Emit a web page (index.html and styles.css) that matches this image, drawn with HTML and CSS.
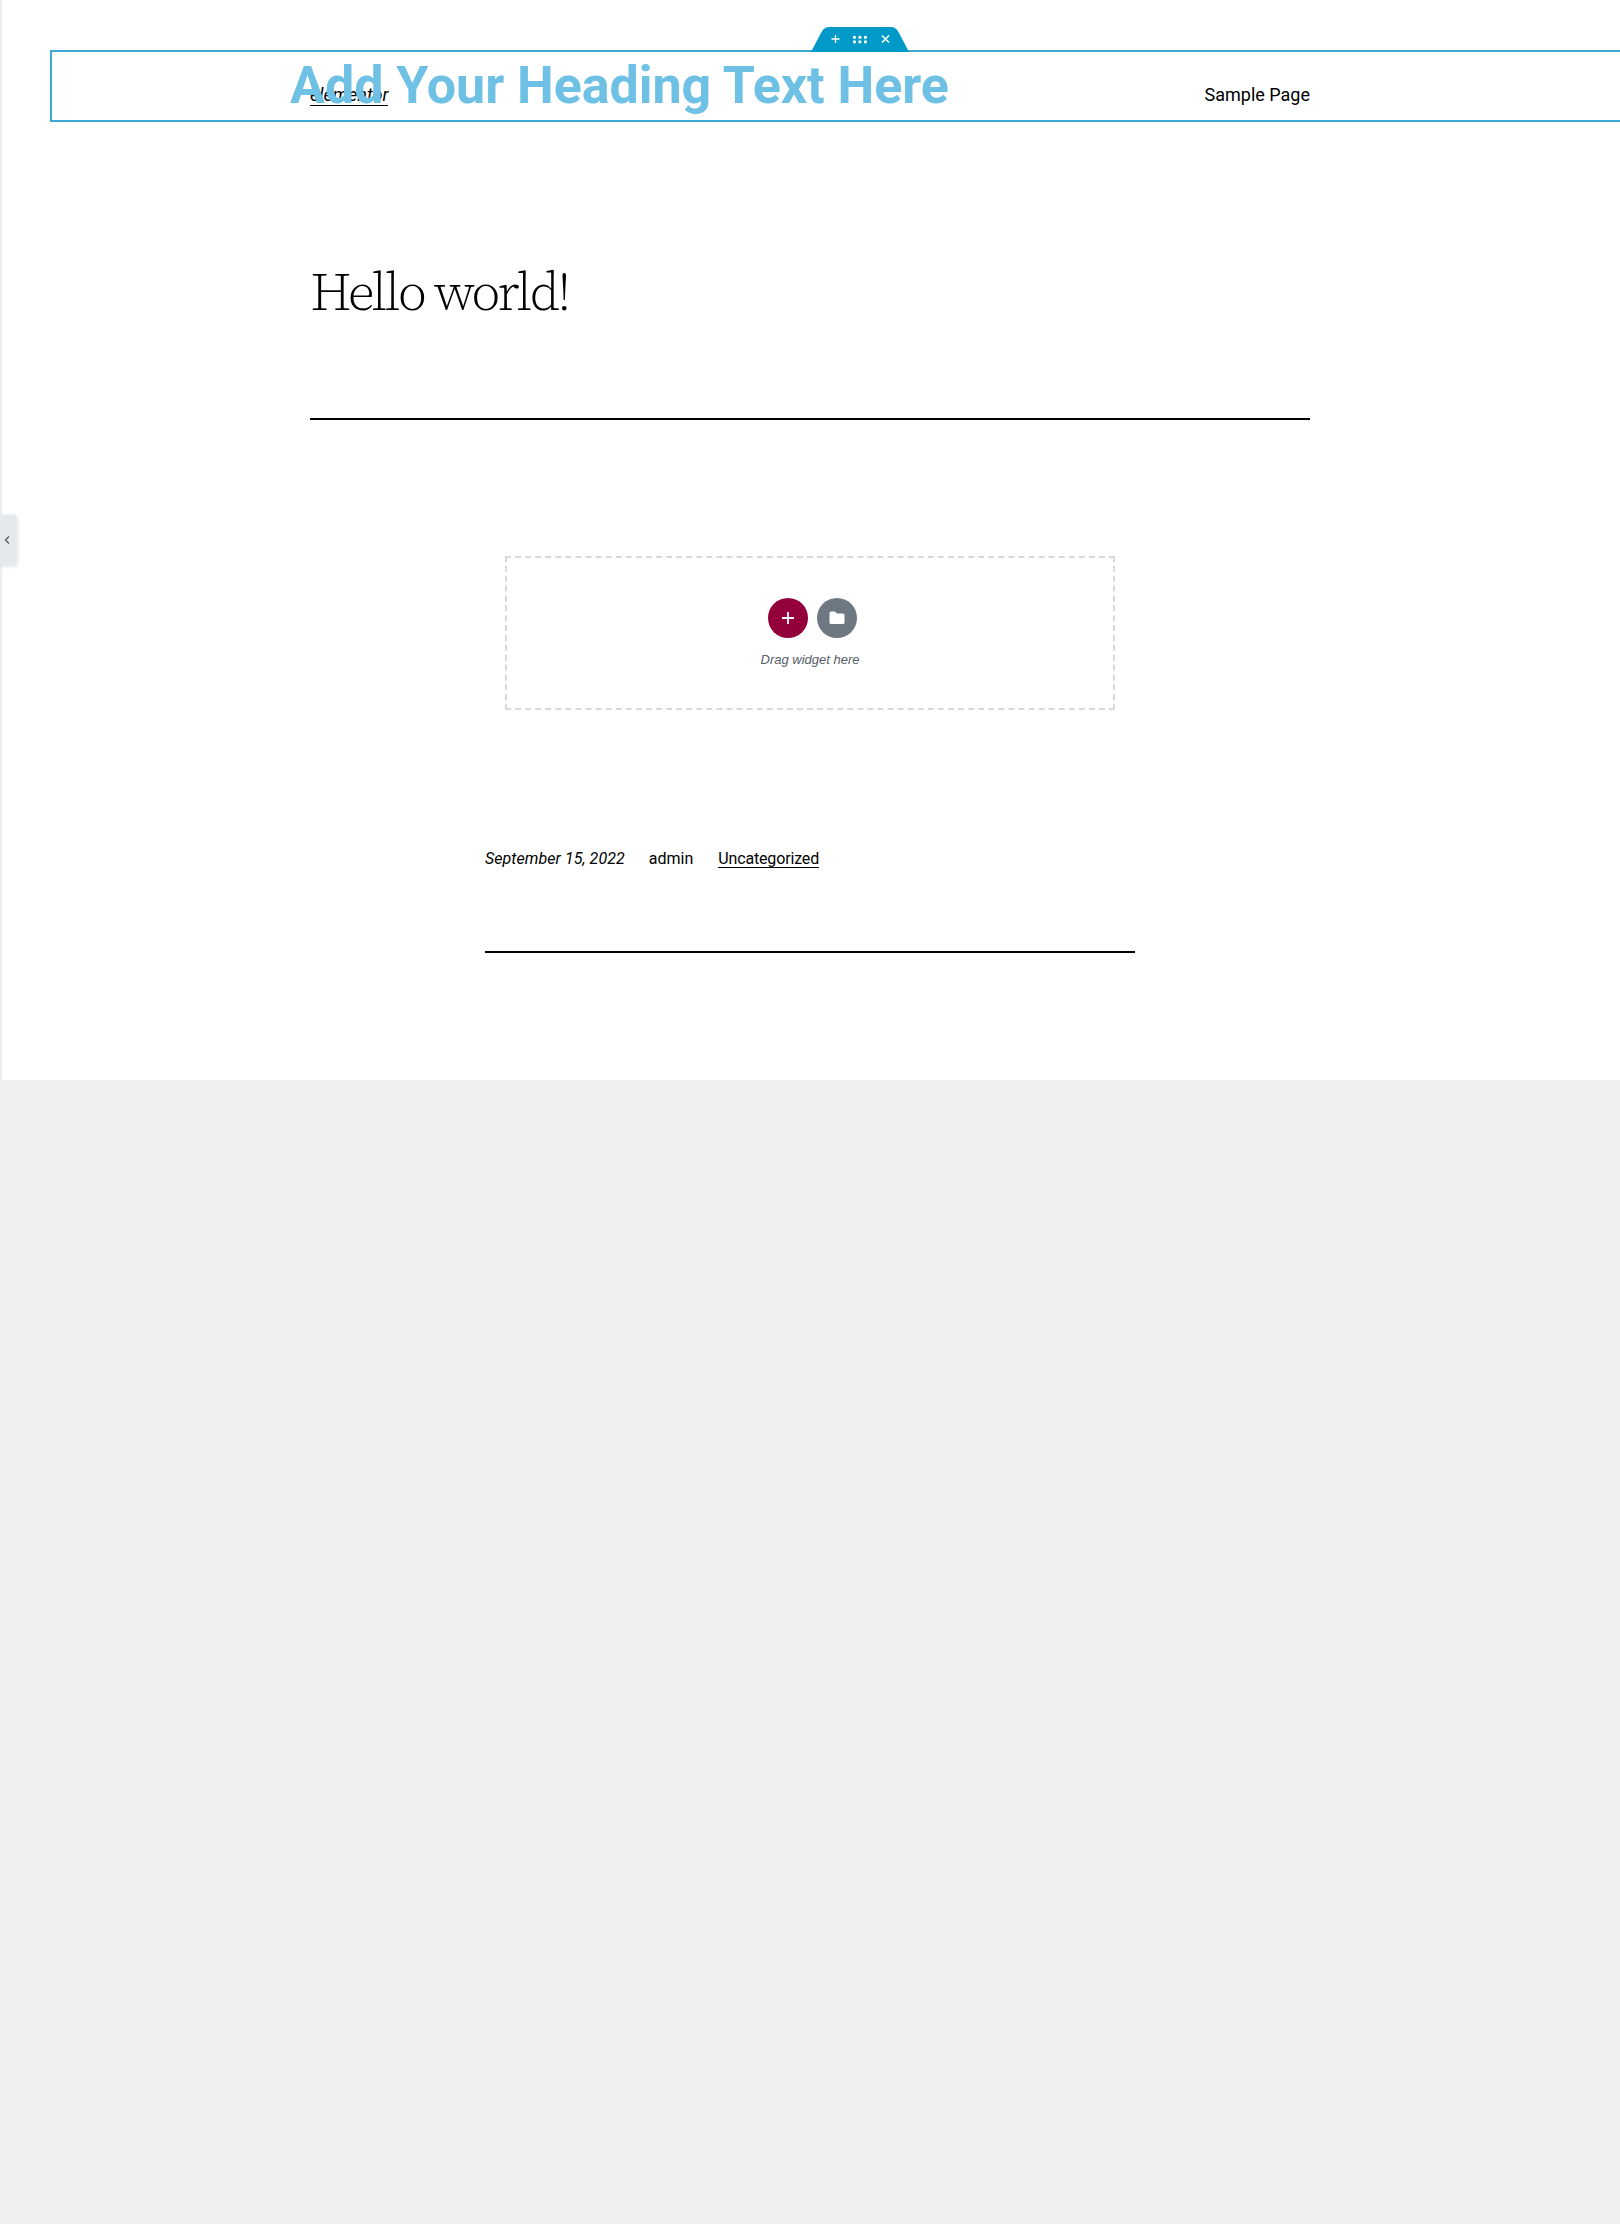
FILE: index.html
```html
<!DOCTYPE html>
<html lang="en">
<head>
<meta charset="utf-8">
<title>Hello world!</title>
<link rel="stylesheet" href="styles.css">
</head>
<body>
<main class="page">
  <header class="site-header">
    <a class="site-title">elementor</a>
    <nav>Sample Page</nav>
  </header>
  <section class="post-head">
    <h1 class="post-title"><span>Hello world!</span></h1>
  </section>
  <section class="drop-area">
    <div class="buttons">
      <span class="round add"><svg width="12" height="12" viewBox="0 0 12 12"><path d="M6 0v12M0 6h12" stroke="#fff" stroke-width="1.8"/></svg></span>
      <span class="round folder"><svg width="16" height="14" viewBox="0 0 16 14"><path d="M2 .5h4l2 2h6a1.500 1.500 0 0 1 1.500 1.500v7.500a1.500 1.500 0 0 1-1.500 1.500H2A1.500 1.500 0 0 1 .5 11.500V2A1.500 1.500 0 0 1 2 .5z" fill="#fff"/></svg></span>
    </div>
    <p class="hint">Drag widget here</p>
  </section>
  <footer class="meta">
    <span class="date">September 15, 2022</span>
    <span class="author">admin</span>
    <a class="category">Uncategorized</a>
  </footer>

  <div class="section-overlay">
    <div class="heading">Add Your Heading Text Here</div>
    <svg class="handle" width="98" height="25" viewBox="0 0 98 25">
      <path d="M0 25 10.500 5Q13.500 0 18 0H80Q84.500 0 87.500 5L98 25z" fill="#0099c8"/>
      <path d="M24.500 8v8M20.500 12h8" stroke="#fff" stroke-width="1.300"/>
      <path d="M42 9h2.800v2.800H42zM47.500 9h2.800v2.800h-2.800zM53 9h2.800v2.800H53zM42 13.500h2.800v2.800H42zM47.500 13.500h2.800v2.800h-2.800zM53 13.500h2.800v2.800H53z" fill="#fff"/>
      <path d="m71 8.500 7 7m0-7-7 7" stroke="#fff" stroke-width="1.600"/>
    </svg>
  </div>
  <div class="panel-toggle"><svg width="6" height="8" viewBox="0 0 6 8"><path d="M5 .5 1.500 4 5 7.500" fill="none" stroke="#515962" stroke-width="1.300"/></svg></div>
</main>
</body>
</html>
```
FILE: styles.css
```css
* { box-sizing: border-box; }
body {
  margin: 0;
  min-height: 2224px;
  background: #f0f0f0;
  color: #000;
  font-family: Roboto, "Liberation Sans", sans-serif;
}
.page {
  position: relative;
  height: 1080px;
  background: #fff;
  overflow: hidden;
}
.page::before {
  content: "";
  position: absolute;
  left: 0;
  top: 0;
  width: 3px;
  height: 100%;
  background: linear-gradient(to right, #e9e9e9, #fafafa);
}
.site-header {
  display: flex;
  justify-content: space-between;
  width: 1000px;
  margin: 0 auto;
  padding-top: 84px;
  font-size: 18px;
  line-height: 22px;
}
.site-title {
  height: 22px;
  font-style: italic;
  border-bottom: 1px solid #000;
}
.post-head {
  width: 1000px;
  height: 314px;
  margin: 0 auto;
  padding-top: 156px;
  border-bottom: 2px solid #000;
}
.post-title {
  margin: 0;
  font: 300 53px/60px "Source Serif 4 Display", "Source Serif 4", "Source Serif Pro", "Liberation Serif", serif;
  letter-spacing: -2.6px;
  white-space: nowrap;
}
.drop-area {
  width: 610px;
  height: 154px;
  margin: 136px auto 0;
  padding-top: 40px;
  border: 2px dashed #d5d8dc;
}
.buttons {
  display: flex;
  justify-content: center;
  gap: 9px;
  padding-left: 5px;
}
.round {
  display: flex;
  align-items: center;
  justify-content: center;
  width: 40px;
  height: 40px;
  border-radius: 50%;
}
.add { background: #93003c; }
.folder { background: #6d7882; }
.hint {
  margin: 13px 0 0;
  color: #556068;
  font: italic 13px/18px "Liberation Sans", Arial, sans-serif;
  text-align: center;
}
.meta {
  display: flex;
  align-items: flex-start;
  gap: 24px;
  width: 650px;
  height: 104px;
  margin: 139px auto 0;
  border-bottom: 2px solid #000;
  font-size: 16px;
  line-height: 20px;
}
.date {
  font-style: italic;
  letter-spacing: .07px;
}
.category {
  height: 19px;
  margin-left: 1px;
  border-bottom: 1px solid #000;
  letter-spacing: -.15px;
}
.section-overlay {
  position: absolute;
  left: 50px;
  top: 50px;
  width: 1620px;
  height: 72px;
  border: 2px solid #3fa9d5;
}
.heading {
  padding-left: 238px;
  color: #6ec1e4;
  font-size: 52px;
  font-weight: 700;
  letter-spacing: -.04px;
  line-height: 68px;
  white-space: nowrap;
}
.handle {
  position: absolute;
  left: 759px;
  top: -25px;
}
.panel-toggle {
  position: absolute;
  left: 0;
  top: 515px;
  display: flex;
  align-items: center;
  width: 16px;
  height: 50px;
  padding-left: 4px;
  background: #e6e9ec;
  border-radius: 0 3px 3px 0;
  box-shadow: 1px 1px 4px rgba(0, 0, 0, .15);
}
```
